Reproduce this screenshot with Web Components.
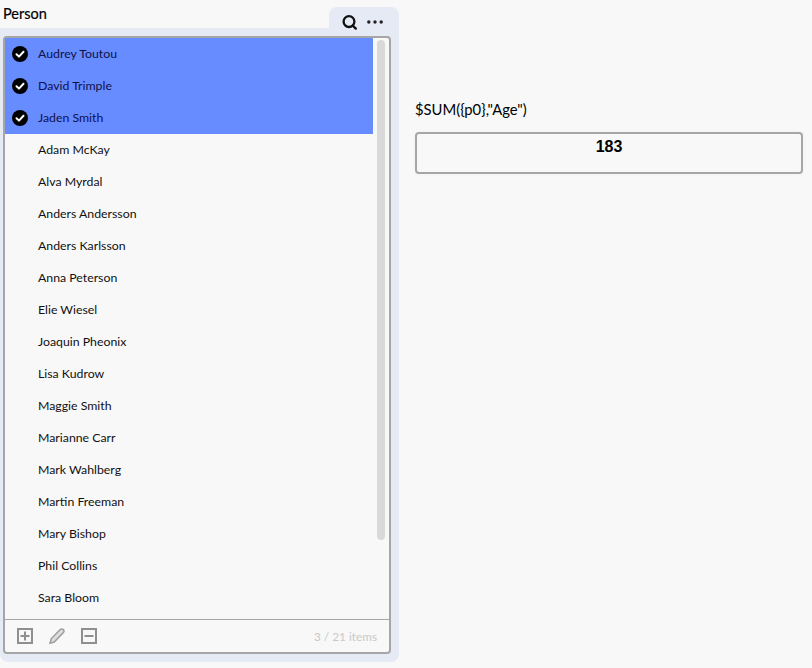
<!DOCTYPE html>
<html>
<head>
<meta charset="utf-8">
<title>Person</title>
<style>
html, body { margin: 0; height: 100%; background: #f8f8f8; }
body { font-family: "Lato", "Noto Sans", sans-serif; color: #000; }
</style>
</head>
<body>
<app-page>
    <filter-pane slot="left" title="Person" count="3 / 21 items">
        <list-row selected>Audrey Toutou</list-row>
        <list-row selected>David Trimple</list-row>
        <list-row selected>Jaden Smith</list-row>
        <list-row>Adam McKay</list-row>
        <list-row>Alva Myrdal</list-row>
        <list-row>Anders Andersson</list-row>
        <list-row>Anders Karlsson</list-row>
        <list-row>Anna Peterson</list-row>
        <list-row>Elie Wiesel</list-row>
        <list-row>Joaquin Pheonix</list-row>
        <list-row>Lisa Kudrow</list-row>
        <list-row>Maggie Smith</list-row>
        <list-row>Marianne Carr</list-row>
        <list-row>Mark Wahlberg</list-row>
        <list-row>Martin Freeman</list-row>
        <list-row>Mary Bishop</list-row>
        <list-row>Phil Collins</list-row>
        <list-row>Sara Bloom</list-row>
    </filter-pane>
    <kpi-box slot="right" label='$SUM({p0},"Age")' value="183"></kpi-box>
</app-page>

<script>
class AppPage extends HTMLElement {
    connectedCallback() {
        this.attachShadow({ mode: 'open' });
        this.shadowRoot.innerHTML = `
            <style>
                :host {
                    display: flex;
                    width: 812px;
                    height: 668px;
                    overflow: hidden;
                }
                .left { flex: 0 0 399px; }
                .right { flex: 1; padding: 100px 9px 0 16px; min-width: 0; }
            </style>
            <div class="left"><slot name="left"></slot></div>
            <div class="right"><slot name="right"></slot></div>
        `;
    }
}

class FilterPane extends HTMLElement {
    connectedCallback() {
        const title = this.getAttribute('title') || '';
        const count = this.getAttribute('count') || '';
        this.attachShadow({ mode: 'open' });
        this.shadowRoot.innerHTML = `
            <style>
                :host { display: block; height: 662px; }
                .head {
                    display: flex;
                    justify-content: space-between;
                    height: 28px;
                    align-items: flex-end;
                }
                .title {
                    font-size: 14.5px;
                    font-weight: 400;
                    -webkit-text-stroke: 0.2px #000;
                    line-height: 18px;
                    padding: 0 0 5px 3px;
                    align-self: flex-start;
                    margin-top: 5px;
                }
                .tools {
                    width: 70px;
                    height: 21px;
                    background: #e6eaf5;
                    border-radius: 8px 8px 0 0;
                    display: flex;
                    align-items: flex-start;
                    justify-content: flex-end;
                    gap: 10px;
                    padding: 7px 16px 0 0;
                    box-sizing: border-box;
                }
                .panel {
                    background: #e6eaf5;
                    height: 634px;
                    box-sizing: border-box;
                    padding: 8px 8px 8px 3px;
                    border-radius: 0 0 8px 8px;
                }
                .frame {
                    height: 618px;
                    box-sizing: border-box;
                    border: 2px solid #a6a6a6;
                    border-radius: 4px;
                    background: #f8f8f8;
                    display: flex;
                    flex-direction: column;
                }
                .body {
                    flex: 1;
                    display: flex;
                    min-height: 0;
                    overflow: hidden;
                }
                .rows { flex: 0 0 368px; }
                .track { flex: 1; padding: 2px 4px 0 4px; }
                .thumb {
                    height: 500px;
                    background: #d9d9d9;
                    border-radius: 4px;
                }
                .foot {
                    flex: 0 0 33px;
                    border-top: 1px solid #a6a6a6;
                    display: flex;
                    align-items: center;
                    padding: 0 12px;
                    gap: 16px;
                    box-sizing: border-box;
                }
                .foot svg { display: block; }
                .count {
                    margin-left: auto;
                    font-size: 11.8px;
                    color: #c8c8c8;
                }
            </style>
            <div class="head">
                <div class="title">${title}</div>
                <div class="tools">
                    <svg width="15" height="16" viewBox="0 0 15 16" fill="none" stroke="#111" stroke-width="2.3">
                        <circle cx="7" cy="7.6" r="5.4"/>
                        <path d="M10.8 11.6 L13.8 14.6" stroke-linecap="round"/>
                    </svg>
                    <svg width="16" height="16" viewBox="0 0 16 16" fill="#222">
                        <circle cx="1.8" cy="8" r="1.7"/>
                        <circle cx="8" cy="8" r="1.7"/>
                        <circle cx="14.2" cy="8" r="1.7"/>
                    </svg>
                </div>
            </div>
            <div class="panel">
                <div class="frame">
                    <div class="body">
                        <div class="rows"><slot></slot></div>
                        <div class="track"><div class="thumb"></div></div>
                    </div>
                    <div class="foot">
                        <svg width="16" height="16" viewBox="0 0 16 16" fill="#dcdcdc" stroke="#8f8f8f" stroke-width="2">
                            <rect x="1" y="1" width="14" height="14" fill="none"/>
                            <path d="M8 3.5 V12.5 M3.5 8 H12.5"/>
                        </svg>
                        <svg width="16" height="16" viewBox="0 0 16 16" fill="#dedede" stroke="#9c9c9c" stroke-width="1.5">
                            <path d="M1 15.2 L2.2 10.8 L11.2 1.6 Q12.8 0.4 14.4 1.6 Q15.6 3 14.4 4.6 L5.2 14 Z"/>
                        </svg>
                        <svg width="16" height="16" viewBox="0 0 16 16" fill="none" stroke="#8f8f8f" stroke-width="2">
                            <rect x="1" y="1" width="14" height="14"/>
                            <path d="M3.5 8 H12.5"/>
                        </svg>
                        <span class="count">${count}</span>
                    </div>
                </div>
            </div>
        `;
    }
}

class ListRow extends HTMLElement {
    connectedCallback() {
        this.attachShadow({ mode: 'open' });
        this.shadowRoot.innerHTML = `
            <style>
                :host {
                    display: flex;
                    align-items: center;
                    height: 32px;
                    font-size: 12.3px;
                    color: #111;
                    padding-left: 7px;
                }
                :host([selected]) { background: #668cff; color: #10104a; }
                .mark { flex: 0 0 26px; height: 16px; }
                .text { margin-bottom: 2px; }
                svg { display: block; }
            </style>
            <div class="mark">
                ${this.hasAttribute('selected') ? `
                <svg width="16" height="16" viewBox="0 0 16 16">
                    <circle cx="8" cy="8" r="8" fill="#000"/>
                    <path d="M4.5 8.2 L7 10.6 L11.5 5.8" fill="none" stroke="#fff" stroke-width="2" stroke-linecap="round" stroke-linejoin="round"/>
                </svg>` : ''}
            </div>
            <span class="text"><slot></slot></span>
        `;
    }
}

class KpiBox extends HTMLElement {
    connectedCallback() {
        const label = this.getAttribute('label') || '';
        const value = this.getAttribute('value') || '';
        this.attachShadow({ mode: 'open' });
        this.shadowRoot.innerHTML = `
            <style>
                :host { display: block; }
                .label {
                    font-size: 14.8px;
                    line-height: 18px;
                    margin-bottom: 14px;
                }
                .box {
                    height: 42px;
                    box-sizing: border-box;
                    border: 2px solid #a6a6a6;
                    border-radius: 4px;
                    box-shadow: 0 0 4px #eef0f8;
                    text-align: center;
                    font: bold 16px/26px "Liberation Sans", Arial, sans-serif;
                }
            </style>
            <div class="label">${label}</div>
            <div class="box">${value}</div>
        `;
    }
}

customElements.define('app-page', AppPage);
customElements.define('filter-pane', FilterPane);
customElements.define('list-row', ListRow);
customElements.define('kpi-box', KpiBox);
</script>
</body>
</html>
